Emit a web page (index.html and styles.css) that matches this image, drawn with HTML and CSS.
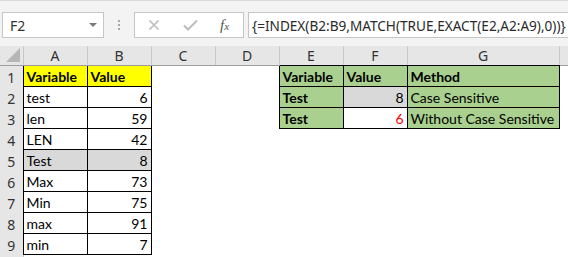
FILE: index.html
```html
<!DOCTYPE html>
<html lang="en">
<head>
  <meta charset="UTF-8" />
  <meta name="viewport" content="width=device-width, initial-scale=1.0"/>
  <title>INDEX MATCH EXACT</title>
  <link rel="stylesheet" href="styles.css">
</head>
<body>
  <div class="formula-bar">
    <div class="name-box">
      <span>F2</span>
      <span class="caret"></span>
    </div>
    <div class="grip"><i></i><i></i><i></i></div>
    <div class="fx-buttons">
      <svg class="icon" width="12" height="10" viewBox="0 0 12 10">
        <path d="M1.5 0.5 L10.5 9.5 M10.5 0.5 L1.5 9.5" stroke="#bcbcbc" stroke-width="1.6" fill="none"/>
      </svg>
      <svg class="icon" width="15" height="11" viewBox="0 0 15 11">
        <path d="M1 5.5 L5 9.5 L14 0.5" stroke="#bcbcbc" stroke-width="2" fill="none"/>
      </svg>
      <span class="fx">f<sub>x</sub></span>
    </div>
    <div class="formula">{=INDEX(B2:B9,MATCH(TRUE,EXACT(E2,A2:A9),0))}</div>
  </div>

  <table class="sheet">
    <colgroup>
      <col class="w-rh">
      <col class="w-c"><col class="w-c"><col class="w-c">
      <col class="w-c"><col class="w-c"><col class="w-c">
      <col class="w-g">
      <col class="w-rest">
    </colgroup>
    <tr class="head">
      <th class="corner">
        <svg width="14" height="14" viewBox="0 0 14 14"><path d="M14 0 L14 14 L0 14 Z" fill="#b6b6b6"/></svg>
      </th>
      <th>A</th><th>B</th><th>C</th><th>D</th>
      <th class="edge">E</th><th class="edge">F</th><th class="edge">G</th>
      <th></th>
    </tr>
    <tr>
      <td class="rh in">1</td>
      <td class="box yellow bold">Variable</td><td class="box yellow bold">Value</td>
      <td></td><td></td>
      <td class="box green bold">Variable</td><td class="box green bold">Value</td><td class="box green bold">Method</td>
      <td></td>
    </tr>
    <tr>
      <td class="rh in">2</td>
      <td class="box">test</td><td class="box num">6</td>
      <td></td><td></td>
      <td class="box green bold">Test</td><td class="box grey num">8</td><td class="box green">Case Sensitive</td>
      <td></td>
    </tr>
    <tr>
      <td class="rh in">3</td>
      <td class="box">len</td><td class="box num">59</td>
      <td></td><td></td>
      <td class="box green bold">Test</td><td class="box num red">6</td><td class="box green">Without Case Sensitive</td>
      <td></td>
    </tr>
    <tr>
      <td class="rh in">4</td>
      <td class="box">LEN</td><td class="box num">42</td>
      <td></td><td></td><td></td><td></td><td></td><td></td>
    </tr>
    <tr>
      <td class="rh in">5</td>
      <td class="box grey">Test</td><td class="box grey num">8</td>
      <td></td><td></td><td></td><td></td><td></td><td></td>
    </tr>
    <tr>
      <td class="rh in">6</td>
      <td class="box">Max</td><td class="box num">73</td>
      <td></td><td></td><td></td><td></td><td></td><td></td>
    </tr>
    <tr>
      <td class="rh in">7</td>
      <td class="box">Min</td><td class="box num">75</td>
      <td></td><td></td><td></td><td></td><td></td><td></td>
    </tr>
    <tr>
      <td class="rh in">8</td>
      <td class="box">max</td><td class="box num">91</td>
      <td></td><td></td><td></td><td></td><td></td><td></td>
    </tr>
    <tr>
      <td class="rh in">9</td>
      <td class="box">min</td><td class="box num">7</td>
      <td></td><td></td><td></td><td></td><td></td><td></td>
    </tr>
    <tr>
      <td class="rh">10</td>
      <td></td><td></td><td></td><td></td><td></td><td></td><td></td><td></td>
    </tr>
  </table>
</body>
</html>
```

FILE: styles.css
```css
body {
  margin: 0;
  width: 568px;
  height: 257px;
  overflow: hidden;
  background: #fff;
  font-family: 'Lato', sans-serif;
}

.formula-bar {
  display: flex;
  align-items: flex-start;
  height: 46px;
  padding-top: 11px;
  box-sizing: border-box;
  background: #f3f3f3;
  border-top: 1px solid #d8d8d8;
}

.name-box,
.fx-buttons,
.formula {
  height: 26px;
  box-sizing: border-box;
  background: #fff;
  border: 1px solid #c6c6c6;
  display: flex;
  align-items: center;
}

.name-box {
  width: 102px;
  margin-left: 2px;
  padding: 0 6px 0 7px;
  justify-content: space-between;
  font-family: 'Noto Sans', sans-serif;
  font-size: 14px;
  color: #333;
}

.caret {
  width: 0;
  height: 0;
  border-left: 4px solid transparent;
  border-right: 4px solid transparent;
  border-top: 4px solid #7a7a7a;
}

.grip {
  width: 30px;
  display: flex;
  flex-direction: column;
  align-items: center;
  gap: 2px;
  padding-top: 8px;
}

.grip i {
  width: 2px;
  height: 2px;
  background: #a8a8a8;
}

.fx-buttons {
  width: 110px;
  padding: 0 0 0 13px;
  gap: 23px;
}

.fx {
  font-family: 'Liberation Serif', serif;
  font-style: italic;
  font-size: 15px;
  color: #555;
  margin-left: -1px;
}

.fx sub {
  font-size: 11px;
  vertical-align: 0;
}

.formula {
  flex: 1;
  margin-left: 4px;
  margin-right: -4px;
  padding-left: 3px;
  font-family: 'Noto Sans', sans-serif;
  font-size: 13.6px;
  color: #2a2a2a;
  white-space: nowrap;
  overflow: hidden;
}

.sheet {
  border-collapse: collapse;
  table-layout: fixed;
  width: 590px;
  font-size: 14px;
  color: #000;
}

.w-rh { width: 23px; }
.w-c { width: 64px; }
.w-g { width: 152px; }
.w-rest { width: 31px; }

.sheet th {
  height: 19px;
  padding: 0;
  background: #e6e6e6;
  border-right: 1px solid #c8c8c8;
  border-bottom: 1px solid #9d9d9d;
  font-family: 'Noto Sans', sans-serif;
  font-weight: normal;
  font-size: 14px;
  color: #333;
  vertical-align: bottom;
}

.sheet th.edge {
  border-bottom-color: #000;
}

.sheet th.corner {
  position: relative;
  border-right-color: #c8c8c8;
}

.corner svg {
  position: absolute;
  right: 3px;
  bottom: 3px;
}

.sheet td {
  height: 19px;
  padding: 0 3px 1px;
  white-space: nowrap;
  overflow: hidden;
  vertical-align: bottom;
}

.sheet td.rh {
  padding: 0;
  background: #e6e6e6;
  border-right: 1px solid #c8c8c8;
  text-align: center;
  font-family: 'Noto Sans', sans-serif;
  font-size: 14px;
  color: #333;
}

.sheet td.rh.in {
  border-right: none;
}

.box { border: 1px solid #000; }
.num { text-align: right; }
.bold { font-weight: bold; }
.yellow { background: #ffff00; }
.green { background: #a9d08e; }
.grey { background: #d9d9d9; }
.red { color: #ff0000; }
```
